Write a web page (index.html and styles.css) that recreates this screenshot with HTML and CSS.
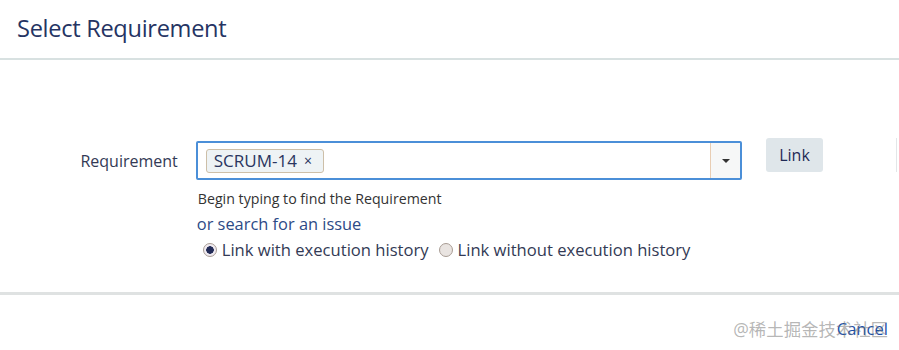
FILE: index.html
```html
<!DOCTYPE html>
<html lang="en">
<head>
    <meta charset="UTF-8">
    <meta name="viewport" content="width=device-width, initial-scale=1.0">
    <title>Select Requirement</title>
    <link rel="stylesheet" href="styles.css">
</head>
<body>
    <div class="dialog">
        <div class="dialog-header">
            <h2>Select Requirement</h2>
        </div>
        <div class="dialog-body">
            <div class="field-row">
                <label class="field-label">Requirement</label>
                <div class="field">
                    <div class="picker">
                        <div class="picker-items">
                            <span class="tag">SCRUM-14 <span class="tag-remove">&times;</span></span>
                        </div>
                        <div class="picker-toggle"><span class="caret"></span></div>
                    </div>
                    <div class="field-help">Begin typing to find the Requirement</div>
                    <a class="search-link" href="#">or search for an issue</a>
                    <div class="radios">
                        <label class="radio"><span class="radio-dot checked"></span>Link with execution history</label>
                        <label class="radio"><span class="radio-dot"></span>Link without execution history</label>
                    </div>
                </div>
                <button class="btn-link">Link</button>
                <span class="btn-edge"></span>
            </div>
        </div>
        <div class="dialog-footer">
            <a class="cancel" href="#">Cancel</a>
            <span class="watermark">@稀土掘金技术社区</span>
        </div>
    </div>
</body>
</html>
```

FILE: styles.css
```css
body {
    margin: 0;
    font-family: "Open Sans", "Noto Sans CJK SC", sans-serif;
    background-color: #fff;
    color: #2a3560;
}
.dialog {
    width: 899px;
    height: 350px;
    overflow: hidden;
}
.dialog-header {
    border-bottom: 2px solid #d8e1e1;
    box-sizing: border-box;
    height: 60px;
    padding-left: 17px;
}
.dialog-header h2 {
    margin: 0;
    padding-top: 12px;
    font-size: 23.6px;
    font-weight: 400;
    color: #253463;
    letter-spacing: -0.3px;
}
.dialog-body {
    height: 235px;
    border-bottom: 3px solid #dfe2e2;
    box-sizing: border-box;
    padding-top: 81px;
}
.field-row {
    display: flex;
    align-items: flex-start;
}
.field-label {
    width: 196px;
    padding-top: 9px;
    padding-right: 18px;
    box-sizing: border-box;
    text-align: right;
    font-size: 16px;
    color: #333a55;
}
.field {
    width: 547px;
}
.picker {
    display: flex;
    height: 39px;
    border: 2px solid #4b8fd8;
    border-radius: 2px;
    box-sizing: border-box;
}
.picker-items {
    flex: 1;
    display: flex;
    align-items: center;
    padding-left: 8px;
}
.tag {
    display: inline-flex;
    align-items: center;
    height: 24px;
    padding: 0 11px 0 7px;
    border: 1px solid #cdbfa8;
    border-radius: 3px;
    background-color: #eef3f5;
    font-size: 17px;
    color: #2a3560;
    box-sizing: border-box;
}
.tag-remove {
    margin-left: 7px;
    font-size: 14px;
}
.picker-toggle {
    width: 29px;
    border-left: 1px solid #e8cdb3;
    background-color: #f6f7f7;
    display: flex;
    align-items: center;
    justify-content: center;
}
.caret {
    width: 0;
    height: 0;
    border-left: 4px solid transparent;
    border-right: 4px solid transparent;
    border-top: 4px solid #333;
}
.field-help {
    margin-top: 9px;
    padding-left: 2px;
    font-size: 14.2px;
    color: #333;
}
.search-link {
    display: block;
    margin-top: 4px;
    padding-left: 1px;
    font-size: 16.4px;
    color: #2d4a86;
    text-decoration: none;
}
.radios {
    display: flex;
    gap: 10px;
    padding-left: 7px;
    margin-top: 3px;
}
.radio {
    display: inline-flex;
    align-items: center;
    font-size: 16.6px;
    color: #333a55;
}
.radio-dot {
    width: 14px;
    height: 14px;
    margin-right: 5px;
    border: 1px solid #a89c94;
    border-radius: 50%;
    box-sizing: border-box;
    background-color: #e9e4e1;
}
.radio-dot.checked {
    background: radial-gradient(circle, #222b57 0 3.5px, #efeaf0 4px);
}
.btn-link {
    margin-left: 24px;
    margin-top: -3px;
    height: 34px;
    width: 57px;
    border: none;
    border-radius: 3px;
    background-color: #dfe6ea;
    font-family: inherit;
    font-size: 16px;
    color: #1f2a55;
}
.btn-edge {
    margin-left: 73px;
    margin-top: -3px;
    width: 2px;
    height: 34px;
    border-left: 1px solid #e3e6e8;
}
.dialog-footer {
    position: relative;
    display: flex;
    justify-content: flex-end;
    padding-top: 22px;
    padding-right: 11px;
}
.cancel {
    font-size: 16.6px;
    color: #1a4fa8;
    text-decoration: none;
}
.watermark {
    position: absolute;
    right: 11px;
    top: 21px;
    font-size: 17.4px;
    color: rgba(120, 120, 120, 0.55);
}
```
